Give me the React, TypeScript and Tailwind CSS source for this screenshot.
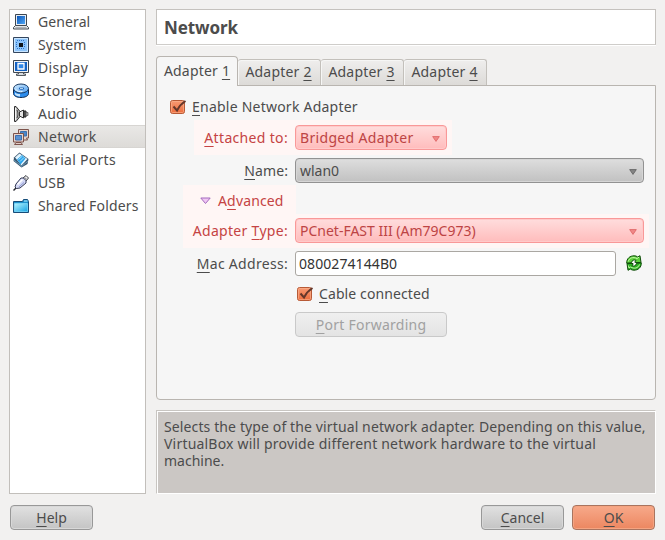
import React from "react";

type IconProps = { children: React.ReactNode };

function Icon({ children }: IconProps) {
  return (
    <svg width="16" height="16" viewBox="0 0 16 16" fill="none" className="shrink-0">
      {children}
    </svg>
  );
}

function Defs() {
  return (
    <svg width="0" height="0" className="absolute">
      <defs>
        <linearGradient id="blue" x1="0" y1="0" x2="1" y2="1">
          <stop offset="0" stopColor="#0a55b8" />
          <stop offset="1" stopColor="#4fa6f4" />
        </linearGradient>
        <linearGradient id="pale" x1="0" y1="0" x2="1" y2="1">
          <stop offset="0" stopColor="#d8efff" />
          <stop offset="1" stopColor="#4f9ff0" />
        </linearGradient>
        <linearGradient id="cyan" x1="0" y1="0" x2="1" y2="1">
          <stop offset="0" stopColor="#b5f4ff" />
          <stop offset="1" stopColor="#18a4e4" />
        </linearGradient>
        <linearGradient id="check" x1="0" y1="0" x2="0" y2="1">
          <stop offset="0" stopColor="#f89b74" />
          <stop offset="1" stopColor="#ec6c3c" />
        </linearGradient>
      </defs>
    </svg>
  );
}

const GeneralIcon = () => (
  <Icon>
    <path d="M2.500.5h11v11h-11z" fill="#e6edf5" stroke="#3d4650" />
    <path d="M4 2h8v8H4z" fill="url(#blue)" />
    <path d="M2.500 11.500h11l2 2v1.500H.5v-1.500z" fill="#e4e6e8" stroke="#444a50" />
    <path d="M2.500 13.500h11" stroke="#aeb2b6" />
  </Icon>
);

const SystemIcon = () => (
  <Icon>
    <path d="M.5.5h15v15H.5z" fill="#9fd0ff" stroke="#34465e" />
    <path d="M1.500 1.500h13v13h-13z" fill="#8cc4fb" stroke="#c9e5ff" />
    <path d="M6 6h4v4H6z" fill="#101418" />
    <path
      d="M4.500 3v2M6.500 3v2M8.500 3v2M10.500 3v2M4.500 11v2M6.500 11v2M8.500 11v2M10.500 11v2M3 5.500h2M3 7.500h2M3 9.500h2M11 5.500h2M11 7.500h2M11 9.500h2"
      stroke="#2f74c8"
      strokeDasharray="1 1"
    />
  </Icon>
);

const DisplayIcon = () => (
  <Icon>
    <path d="M.5.5h15v12H.5z" fill="#f0f3f6" stroke="#3d4650" />
    <path d="M2 2h12v9H2z" fill="#1262c4" />
    <path d="M5 3.500h6v5.500H5z" fill="#2f86e6" stroke="#fff" strokeWidth="1.300" />
    <path d="M5.500 12.500h5v1.500h2v1.500h-9V14h2z" fill="#d9dde1" stroke="#444a50" strokeWidth=".9" />
  </Icon>
);

const StorageIcon = () => (
  <Icon>
    <path d="M.5 6v4.500C.5 13 4 14.500 8 14.500s7.500-1.500 7.500-4V6z" fill="#2c8cec" stroke="#132c50" />
    <path d="M2 9.500v2c1 1 3 2 5 2V11c-2 0-4-.5-5-1.500z" fill="#c4e5ff" />
    <ellipse cx="8" cy="5.500" rx="7.500" ry="4.500" fill="url(#pale)" stroke="#183962" />
    <path d="M2.500 6c1 2.500 4.500 3 7 2.500" stroke="#e9f7ff" />
    <ellipse cx="8.500" cy="5.500" rx="2.700" ry="1.300" fill="#1d63b6" />
    <path d="M7 5.300h3" stroke="#d9f1ff" />
  </Icon>
);

const AudioIcon = () => (
  <Icon>
    <path d="M1.500.5h1.500l4 5v5l-4 5H1.500z" fill="#b8b8b8" stroke="#303030" />
    <path d="M2.500 2v12" stroke="#f5f5f5" />
    <path d="M4 4c1.300 2.500 1.300 5.500 0 8" stroke="#444" />
    <path d="M6.500 6l4-2v8l-4-2z" fill="#e4e4e4" stroke="#303030" />
    <path d="M11 5h2v6h-2z" fill="#777" stroke="#222" />
    <path d="M13 6.500h2v3h-2z" fill="#bbb" stroke="#555" strokeWidth=".8" />
  </Icon>
);

const NetworkIcon = () => (
  <Icon>
    <path d="M5.500.5h10v8.500h-2l1 2H9l-3.500-2z" fill="#e8d4cd" stroke="#7d534b" />
    <path d="M7.500 2.500h6v4.500h-6z" fill="#4d86c8" stroke="#3d6fae" />
    <path d="M.5 4.500h10v8.500H.5z" fill="#e8d4cd" stroke="#7d534b" />
    <path d="M2.500 6.500h6V11h-6z" fill="#5b92d2" stroke="#3d6fae" />
    <path d="M3 13.500h5l1.500 2h-8z" fill="#dfcbc5" stroke="#7d534b" />
  </Icon>
);

const SerialIcon = () => (
  <Icon>
    <path d="M1 5.500L6.500.500 15.500 7l-1 5-6 3.500L.500 9z" fill="#38546c" />
    <path d="M2 5.500l4.500-4L14.500 7l-6 6.500z" fill="#e1f4ff" />
    <path d="M4 7.500l5-4.500 3.500 3.500-5 6z" fill="#2ba5ec" />
    <path d="M5.500 7.500l4-3.500M7 9.500l4-4" stroke="#a8e0fc" />
    <path d="M1.500 8.500l7 5.500M14.500 9.500l-6 5" stroke="#8ccbec" strokeDasharray="1.500 1" />
  </Icon>
);

const UsbIcon = () => (
  <Icon>
    <path d="M10 3l3-2.500L15.500 3 13 6z" fill="#eee" stroke="#3e4048" />
    <path d="M11.800 2.500l2 2" stroke="#777" />
    <path d="M3 9l5-6h2.500L13 5.500V8l-6 5-3.500.5L2 12z" fill="#d3d8f5" stroke="#353b57" />
    <path d="M4.500 9.500l5-5" stroke="#fff" strokeWidth="1.600" />
    <path d="M6 12l5-4.500" stroke="#8e98d2" />
    <path d="M3 13L.5 15.500" stroke="#24262f" strokeWidth="1.400" />
  </Icon>
);

const FolderIcon = () => (
  <Icon>
    <path d="M.5 3.500h9l1-2h4l1 2V14.500H.5z" fill="#1e92ce" stroke="#174c78" />
    <path d="M11 3h3.500" stroke="#b6efff" />
    <path d="M1.500 5.500h13v8h-13z" fill="url(#cyan)" stroke="#92e6ff" strokeWidth=".6" />
  </Icon>
);

const RefreshIcon = () => (
  <Icon>
    <path
      d="M.7 8.200C.5 3.500 4 .8 8 .8c1.600 0 2.700.4 3.700 1.200L14 .7l1 6.800H8.500L10 5.300C8 4.500 6 5 5.500 7.700z"
      fill="#5bd03a"
      stroke="#114d0c"
    />
    <path
      d="M15.300 7.800c.2 4.700-3.300 7.400-7.300 7.400-1.600 0-2.700-.4-3.700-1.200L2 15.300 1 8.500h6.500L6 10.700c2 .8 4 .3 4.500-2.400z"
      fill="#2bb020"
      stroke="#114d0c"
    />
    <path
      d="M2.300 6.500C3 3 7 1.500 11 3.500l2-1.300M2.500 10.500l.5 2.500 1.500-1c3.500 2 7.500 1.500 9-2.500"
      stroke="#c9f9ab"
    />
    <path d="M6 8l1.500-2L9 8l1-.2L8.500 10 7 8z" fill="#fff" />
  </Icon>
);

function Key({ children }: { children: string }) {
  return (
    <span className="underline decoration-1 underline-offset-[3px] [text-decoration-skip-ink:none]">
      {children}
    </span>
  );
}

function Check() {
  return (
    <svg width="17" height="16" viewBox="0 0 17 16" fill="none" className="shrink-0">
      <rect x=".5" y="1.500" width="14" height="13" rx="2" fill="url(#check)" stroke="#b75a36" />
      <rect x="1.500" y="2.500" width="12" height="11" rx="1" stroke="#fab08e" strokeOpacity=".65" />
      <path d="M3.500 7.500l3.500 4C9 7.500 11.500 4.500 15.500 2" stroke="#65372a" strokeWidth="2" />
    </svg>
  );
}

function Arrow({ pink = false }: { pink?: boolean }) {
  return (
    <svg width="8" height="6" viewBox="0 0 8 6" className="mt-[3px] shrink-0">
      <path
        d="M.7.600h6.600L4 5.400z"
        fill={pink ? "#f08888" : "#858585"}
        stroke={pink ? "#e06868" : "#646464"}
        strokeWidth=".9"
      />
    </svg>
  );
}

const items = [
  { icon: GeneralIcon, label: "General", tracking: "tracking-[0.1px]" },
  { icon: SystemIcon, label: "System", tracking: "tracking-[0.15px]" },
  { icon: DisplayIcon, label: "Display", tracking: "tracking-[0.35px]" },
  { icon: StorageIcon, label: "Storage", tracking: "tracking-[0.45px]" },
  { icon: AudioIcon, label: "Audio", tracking: "tracking-[0.2px]" },
  { icon: NetworkIcon, label: "Network", tracking: "tracking-[0.3px]" },
  { icon: SerialIcon, label: "Serial Ports", tracking: "tracking-[0.28px]" },
  { icon: UsbIcon, label: "USB", tracking: "tracking-[0.1px]" },
  { icon: FolderIcon, label: "Shared Folders", tracking: "tracking-[0.18px]" },
];

const combo = "flex h-[25px] items-center justify-between rounded-[4px] border pl-1 pr-[6px]";
const pinkCombo =
  "border-[#f99898] bg-linear-to-b from-[#ffdddd] to-[#ffbcbc] text-[#bd4444] shadow-[inset_0_0_0_1px_#ffcaca]";
const grayCombo =
  "border-[#929292] bg-linear-to-b from-[#dedede] to-[#c1c1c1] shadow-[inset_0_0_0_1px_#d6d6d6]";
const button =
  "flex h-[25px] w-[83px] items-center justify-center rounded-[4px] border text-[14px]";
const grayButton =
  "border-[#989898] bg-linear-to-b from-[#e1e1e1] to-[#c4c4c4] shadow-[inset_0_0_0_1px_#d8d8d8]";

export default function App() {
  return (
    <div className="flex h-[540px] w-[665px] flex-col overflow-hidden bg-[#f2f1f0] pl-[9px] pr-[9px] pt-[9px] font-['Noto_Sans','Open_Sans',sans-serif] text-[14px] leading-[17px] whitespace-nowrap text-[#4c4c4c]">
      <Defs />
      <main className="flex h-[485px] gap-[10px]">
        <nav className="w-[137px] border border-[#c2bfbb] bg-white">
          {items.map(({ icon: Glyph, label, tracking }) => (
            <div
              key={label}
              className={`flex h-[23px] items-center gap-[9px] pl-[3px] ${
                label === "Network"
                  ? "border-y border-y-[#d7d5d2] bg-linear-to-b from-[#e9e8e6] to-[#dddbd8]"
                  : ""
              }`}
            >
              <Glyph />
              <span className={tracking}>{label}</span>
            </div>
          ))}
        </nav>

        <section className="flex w-[500px] flex-col">
          <header className="flex h-[36px] items-center border border-[#c5c2be] border-b-[#cfcdca] bg-white pl-[7px] pt-px text-[17px] font-bold tracking-[-0.1px] shadow-[0_1px_0_#fff]">
            Network
          </header>

          <div className="z-10 mt-[11px] flex h-[30px] items-end tracking-[0.2px]">
            <div className="flex h-[30px] w-[82px] items-center justify-center rounded-t-[4px] border border-b-0 border-[#b9b5b0] bg-[#f6f6f6] pb-[2px]">
              <span>
                Adapter <Key>1</Key>
              </span>
            </div>
            {["2", "3", "4"].map((n) => (
              <div
                key={n}
                className="mb-px flex h-[26px] w-[83px] items-center justify-center rounded-t-[3px] border border-b-0 border-l-0 border-[#c3c0bb] bg-linear-to-b from-[#efeeed] to-[#dddbd8] pr-px pb-[2px] shadow-[inset_1px_1px_0_#f6f6f5]"
              >
                <span>
                  Adapter <Key>{n}</Key>
                </span>
              </div>
            ))}
          </div>

          <div className="-mt-px h-[315px] rounded-b-[4px] border border-[#b9b5b0] bg-[#f6f6f6]">
            <div className="flex h-[34px] items-center gap-[5px] pl-[13px] pt-2">
              <Check />
              <span className="-mt-px pb-px tracking-[0.23px]">
                <Key>E</Key>nable Network Adapter
              </span>
            </div>

            <div className="ml-[37px] flex h-[35px] w-[258px] items-center bg-[#fff6f5]">
              <span className="w-[94px] text-right tracking-[0.33px] text-[#c54343]">
                <Key>A</Key>ttached to:
              </span>
              <div className={`${combo} ${pinkCombo} ml-[7px] w-[152px]`}>
                <span className="tracking-[0.33px]">Bridged Adapter</span>
                <Arrow pink />
              </div>
            </div>

            <div className="flex h-[30px] items-center pt-px">
              <span className="w-[131px] text-right tracking-[0.1px]">
                <Key>N</Key>ame:
              </span>
              <div className={`${combo} ${grayCombo} ml-[7px] w-[349px]`}>
                <span>wlan0</span>
                <Arrow />
              </div>
            </div>

            <div className="ml-[26px] flex h-[29px] w-[113px] items-center bg-[#fff6f5] pl-[17px] pt-[2px] text-[#c54343]">
              <svg width="11" height="8" viewBox="0 0 11 8" className="mr-[7px]">
                <path d="M.8 1h9.400L5.500 6.500z" fill="#f1c6f3" stroke="#a26abe" />
              </svg>
              <span className="tracking-[0.15px]">
                A<Key>d</Key>vanced
              </span>
            </div>

            <div className="ml-[26px] flex h-[34px] w-[466px] items-center bg-[#fff6f5] pb-px">
              <span className="w-[105px] text-right tracking-[0.3px] text-[#c54343]">
                Adapter <Key>T</Key>ype:
              </span>
              <div className={`${combo} ${pinkCombo} ml-[7px] w-[349px]`}>
                <span>PCnet-FAST III (Am79C973)</span>
                <Arrow pink />
              </div>
            </div>

            <div className="flex h-[31px] items-center">
              <span className="w-[131px] text-right tracking-[0.3px]">
                <Key>M</Key>ac Address:
              </span>
              <div className="ml-[7px] flex h-[25px] w-[321px] items-center rounded-[3px] border border-[#aaa7a2] bg-white pl-[3px] tracking-[0.08px] text-[#333]">
                0800274144B0
              </div>
              <span className="ml-[10px] pb-[2px]">
                <RefreshIcon />
              </span>
            </div>

            <div className="flex h-[30px] items-center gap-[5px] pl-[140px]">
              <Check />
              <span className="pb-[2px] tracking-[0.1px]">
                <Key>C</Key>able connected
              </span>
            </div>

            <div className="flex h-[31px] items-center pl-[138px]">
              <div className="flex h-[25px] w-[152px] items-center justify-center rounded-[4px] border border-[#c9c9c9] bg-linear-to-b from-[#efefef] to-[#e4e4e4] text-[#a1a1a1]">
                <span className="tracking-[0.25px]">
                  <Key>P</Key>ort Forwarding
                </span>
              </div>
            </div>
          </div>

          <div className="mt-[10px] h-[84px] border border-[#c8c5c1] border-r-white border-b-white bg-[#cbc7c4] pl-[7px] pt-[7px] text-[14px] leading-[17px] shadow-[inset_1px_1px_0_#fff]">
            <p className="tracking-[0.12px]">
              Selects the type of the virtual network adapter. Depending on this value,
            </p>
            <p className="tracking-[0.2px]">
              VirtualBox will provide different network hardware to the virtual
            </p>
            <p>machine.</p>
          </div>
        </section>
      </main>

      <footer className="mt-[11px] flex items-center pl-px pr-px">
        <div className={`${button} ${grayButton}`}>
          <span>
            <Key>H</Key>elp
          </span>
        </div>
        <div className={`${button} ${grayButton} ml-auto mr-[8px]`}>
          <span>
            <Key>C</Key>ancel
          </span>
        </div>
        <div
          className={`${button} border-[#a9745f] bg-linear-to-b from-[#f7a98a] to-[#ec8760] shadow-[inset_0_0_0_1px_#f5a481]`}
        >
          <span>
            <Key>O</Key>K
          </span>
        </div>
      </footer>
    </div>
  );
}
